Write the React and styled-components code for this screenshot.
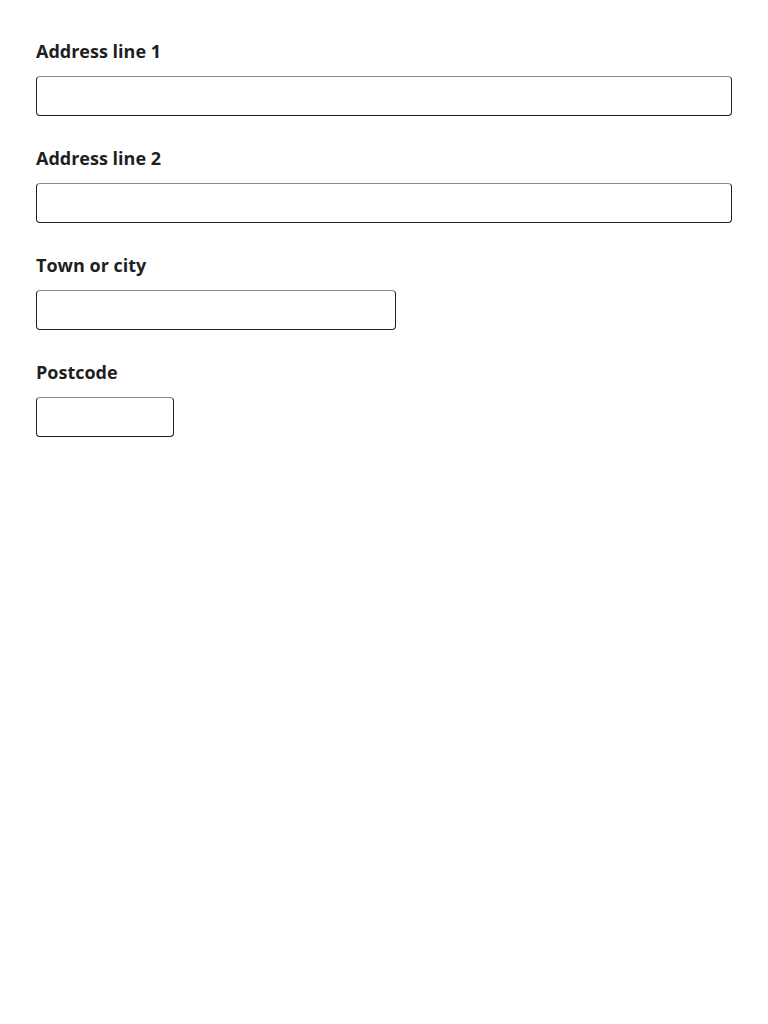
import React from 'react';
import styled, { createGlobalStyle } from 'styled-components';

const GlobalStyle = createGlobalStyle`
  body {
    margin: 0;
    background: #fff;
    font-family: 'Open Sans', 'Noto Sans', sans-serif;
    color: #1f1f1f;
  }
`;

const Form = styled.form`
  display: flex;
  flex-direction: column;
  gap: 27px;
  padding: 36px;
`;

const Field = styled.div`
  display: flex;
  flex-direction: column;
  gap: 10px;
`;

const Label = styled.label`
  font-size: 18px;
  font-weight: 700;
  line-height: 30px;
  color: #1f1f1f;
`;

const Input = styled.input`
  box-sizing: border-box;
  width: ${(p) => p.width || '100%'};
  height: 40px;
  padding: 0 10px;
  border: 1px solid #1f1f1f;
  border-top-color: #8a8a8a;
  border-radius: 4px;
  background: #fff;
  font-family: inherit;
  font-size: 16px;
  outline: none;
`;

const fields = [
  { id: 'address-1', label: 'Address line 1' },
  { id: 'address-2', label: 'Address line 2' },
  { id: 'town', label: 'Town or city', width: '360px' },
  { id: 'postcode', label: 'Postcode', width: '138px' },
];

const App = () => {
  return (
    <>
      <GlobalStyle />
      <Form>
        {fields.map((field) => (
          <Field key={field.id}>
            <Label htmlFor={field.id}>{field.label}</Label>
            <Input id={field.id} type="text" width={field.width} />
          </Field>
        ))}
      </Form>
    </>
  );
};

export default App;
